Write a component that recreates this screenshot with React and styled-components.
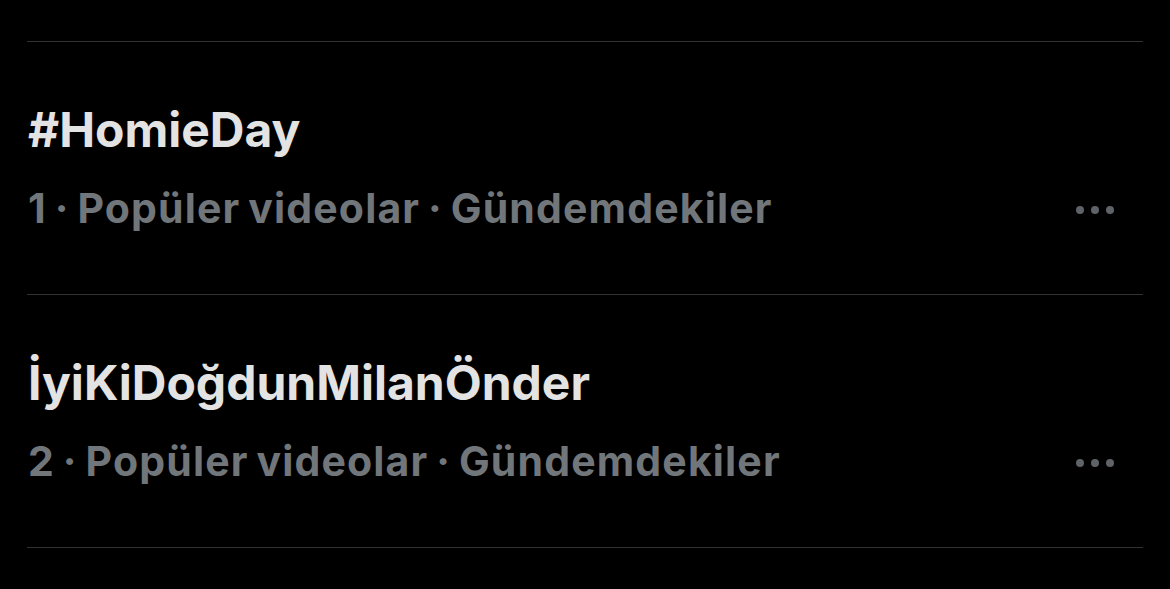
import React from "react";
import styled, { createGlobalStyle } from "styled-components";

const GlobalStyle = createGlobalStyle`
  html, body {
    margin: 0;
    padding: 0;
    background: #000;
  }
  body {
    font-family: Inter, "Noto Sans", "DejaVu Sans", sans-serif;
    -webkit-font-smoothing: antialiased;
  }
`;

const List = styled.div`
  padding: 41px 27px 0;
  width: 1170px;
  height: 589px;
  box-sizing: border-box;
  background: #000;
  overflow: hidden;
`;

const TrendRow = styled.div`
  display: flex;
  align-items: flex-start;
  justify-content: space-between;
  border-top: 1px solid #2f3336;
  padding: 60px 0 60px 1px;
  &:last-child {
    border-bottom: 1px solid #2f3336;
  }
`;

const TrendText = styled.div`
  display: flex;
  flex-direction: column;
  gap: 24px;
`;

const TrendTitle = styled.div`
  color: #e3e3e3;
  font-size: 48px;
  line-height: 56px;
  font-weight: 700;
  letter-spacing: 0;
`;

const TrendMeta = styled.div`
  color: #71767b;
  font-size: 41px;
  line-height: 52px;
  font-weight: 700;
  letter-spacing: 1.15px;
  word-spacing: -3px;
`;

const MoreButton = styled.button`
  display: flex;
  gap: 7px;
  align-items: center;
  margin: 104px 29px 0 0;
  padding: 0;
  background: none;
  border: none;
`;

const Dot = styled.span`
  width: 8px;
  height: 8px;
  border-radius: 50%;
  background: #5f6266;
`;

const trends = [
  { rank: 1, title: "#HomieDay", category: "Popüler videolar" },
  { rank: 2, title: "İyiKiDoğdunMilanÖnder", category: "Popüler videolar" },
];

export default function App() {
  return (
    <>
      <GlobalStyle />
      <List>
        {trends.map((t) => (
          <TrendRow key={t.rank}>
            <TrendText>
              <TrendTitle>{t.title}</TrendTitle>
              <TrendMeta>
                {t.rank} · {t.category} · Gündemdekiler
              </TrendMeta>
            </TrendText>
            <MoreButton aria-label="Daha fazla">
              <Dot />
              <Dot />
              <Dot />
            </MoreButton>
          </TrendRow>
        ))}
      </List>
    </>
  );
}
